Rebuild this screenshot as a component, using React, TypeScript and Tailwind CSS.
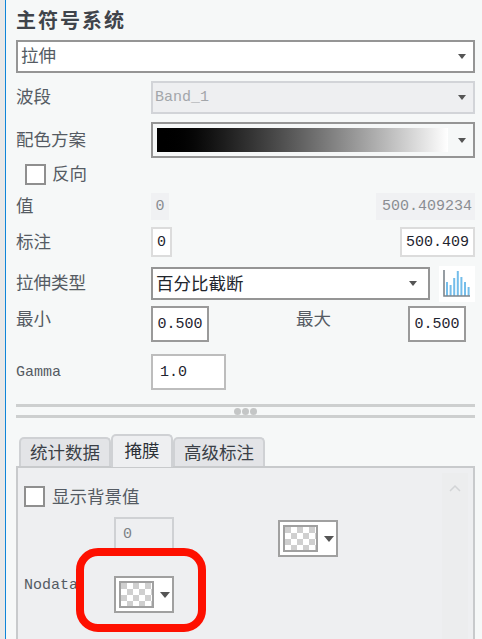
const cjk = "font-['Noto_Sans_CJK_SC',sans-serif]"
const mono = "font-['Liberation_Mono',monospace]"

function Caret({ className = 'border-t-[#555]' }: { className?: string }) {
  return <span className={`w-0 h-0 border-x-[4px] border-x-transparent border-t-[5px] ${className}`} />
}

function Label({ children, className = '' }: { children: React.ReactNode; className?: string }) {
  return <span className={`${cjk} block pb-[2px] text-[17.5px] leading-none text-[#555b63] ${className}`}>{children}</span>
}

function Row({ label, children, className = '', labelClass = '' }: { label: string; children: React.ReactNode; className?: string; labelClass?: string }) {
  return (
    <div className={`flex items-center ${className}`}>
      <div className="w-[135px] shrink-0">
        <Label className={labelClass}>{label}</Label>
      </div>
      {children}
    </div>
  )
}

function NumBox({ value, className = '', muted = false }: { value: string; className?: string; muted?: boolean }) {
  return (
    <div
      className={`${mono} text-[15px] pt-[2px] flex items-center border-2 bg-white text-[#1f2430] ${muted ? 'border-[#dcdcdc]' : 'border-[#9a9a9a]'} ${className}`}
    >
      {value}
    </div>
  )
}

function Checkbox() {
  return <span className="w-[21px] h-[21px] shrink-0 bg-white border-2 border-[#8f8f8f]" />
}

function Swatch() {
  return (
    <div className="w-[60px] h-[37px] flex items-center gap-[6px] pl-[3px] bg-white border-2 border-[#a0a0a0]">
      <div className="w-[35px] h-[27px] border-2 border-[#a0a0a0] bg-[repeating-conic-gradient(from_90deg,#cfcfcf_0_25%,#ffffff_0_50%)] bg-size-[12px_12px]" />
      <Caret className="border-t-[#555] border-x-[5px] border-t-[6px]" />
    </div>
  )
}

function Histogram() {
  // bar left edge and top, in icon coordinates
  const bars = [
    [7, 16],
    [10.6, 19],
    [14.2, 12],
    [17.8, 5],
    [21.4, 11],
    [25, 16],
    [28.6, 21],
  ]
  return (
    <div className="w-[36px] h-[36px] ml-[9px] mt-[1px] bg-white">
      <svg width="36" height="36" viewBox="0 0 36 36">
        {bars.map(([x, y]) => (
          <rect key={x} x={x} y={y} width="2" height={30 - y} fill="#74bdea" />
        ))}
        <path d="M5 4V30H31" fill="none" stroke="#7d858c" strokeWidth="1.6" />
      </svg>
    </div>
  )
}

function Tab({ label, active = false }: { label: string; active?: boolean }) {
  return (
    <div
      className={`${cjk} flex items-center justify-center border-2 border-b-0 rounded-t-[5px] text-[17.5px] leading-none ${
        active
          ? 'w-[62px] h-[33px] pb-[4px] bg-[#eeeff1] border-[#cfd1d4] text-[#2c3138] z-10'
          : 'w-[92px] h-[30px] pb-[2px] bg-[#e3e4e7] border-[#cfd1d4] text-[#3a3f46]'
      }`}
    >
      {label}
    </div>
  )
}

export default function App() {
  return (
    <div className="relative h-[639px] w-[482px] overflow-hidden flex bg-[#f6f8f8]">
      <div className="w-[6px] shrink-0 bg-[#e8e8e8] border-r border-r-[#0f85d8]" />
      <div className="flex-1 min-w-0 flex flex-col pl-[10px] pr-[7px]">
        <div className={`${cjk} h-[40px] pt-[7px] font-bold text-[20px] leading-[26px] tracking-[2px] text-[#3f444b]`}>
          主符号系统
        </div>

        <div className="h-[33px] flex items-center justify-between pl-[3px] pr-[7px] bg-white border-2 border-[#959595]">
          <Label className="text-[#2b3038] pb-[4px]">拉伸</Label>
          <Caret />
        </div>

        <Row label="波段" className="mt-[8px]" labelClass="pb-[4px]">
          <div className="flex-1 h-[33px] flex items-center justify-between pl-[2px] pr-[7px] bg-[#eeeff1] border-2 border-[#d2d4d8]">
            <span className={`${mono} text-[15px] pt-[2px] text-[#a3a6aa]`}>Band_1</span>
            <Caret />
          </div>
        </Row>

        <Row label="配色方案" className="mt-[8px]">
          <div className="flex-1 h-[36px] flex items-center justify-between pl-[4px] pr-[7px] border-2 border-[#959595]">
            <div className="w-[291px] h-[24px] bg-linear-to-r from-black to-white" />
            <Caret />
          </div>
        </Row>

        <div className="mt-[6px] ml-[9px] h-[21px] flex items-center gap-[6px]">
          <Checkbox />
          <Label className="pb-[4px]">反向</Label>
        </div>

        <Row label="值" className="mt-[8px] h-[27px]" labelClass="pb-[4px]">
          <div className={`${mono} w-[18px] h-[27px] pt-[2px] flex items-center justify-center text-[15px] bg-[#f0f1f3] text-[#8a8d92]`}>0</div>
          <div className={`${mono} w-[99px] h-[27px] ml-auto pr-[3px] pt-[2px] flex items-center justify-end text-[15px] bg-[#f0f1f3] text-[#8a8d92]`}>
            500.409234
          </div>
        </Row>

        <Row label="标注" className="mt-[7px] h-[30px]">
          <NumBox value="0" muted className="w-[21px] h-[30px] justify-center" />
          <NumBox value="500.409" muted className="w-[75px] h-[30px] justify-center ml-auto" />
        </Row>

        <Row label="拉伸类型" className="mt-[10px] h-[33px]" labelClass="pb-[3px]">
          <div className="w-[279px] h-[33px] flex items-center justify-between pl-[3px] pr-[11px] bg-white border-2 border-[#959595]">
            <Label className="text-[#22262d]">百分比截断</Label>
            <Caret />
          </div>
          <Histogram />
        </Row>

        <div className="mt-[6px] h-[36px] flex">
          <div className="w-[135px] shrink-0 pt-[3px]">
            <Label>最小</Label>
          </div>
          <NumBox value="0.500" className="w-[58px] h-[36px] justify-center" />
          <div className="ml-[87px] pt-[3px]">
            <Label>最大</Label>
          </div>
          <NumBox value="0.500" className="w-[58px] h-[36px] justify-center ml-[77px]" />
        </div>

        <div className="mt-[12px] h-[36px] flex items-center">
          <span className={`${mono} w-[135px] shrink-0 pt-[2px] text-[15px] text-[#555b63]`}>Gamma</span>
          <div className={`${mono} w-[75px] h-[36px] pl-[7px] pt-[2px] flex items-center text-[15px] bg-white text-[#1f2430] border-2 border-[#bdbdbd]`}>
            1.0
          </div>
        </div>

        <div className="mt-[14px] h-[14px] flex items-center justify-center gap-[1px] border-t-[3px] border-b-[3px] border-[#cdcfcf]">
          <span className="w-[7px] h-[7px] rounded-full bg-[#c4c6c6]" />
          <span className="w-[7px] h-[7px] rounded-full bg-[#c4c6c6]" />
          <span className="w-[7px] h-[7px] rounded-full bg-[#c4c6c6]" />
        </div>

        <div className="mt-[16px] h-[33px] ml-[3px] flex items-end">
          <Tab label="统计数据" />
          <Tab label="掩膜" active />
          <Tab label="高级标注" />
        </div>

        <div className="flex-1 -mt-[1px] flex bg-[#eeeff1] border-2 border-b-0 border-[#c8cacc]">
          <div className="flex-1 min-w-0 flex flex-col pl-[6px] pt-[18px]">
            <div className="flex items-center gap-[7px]">
              <Checkbox />
              <Label>显示背景值</Label>
            </div>
            <div className="mt-[10px] flex items-start">
              <div className={`${mono} ml-[90px] w-[60px] h-[36px] pl-[7px] flex items-center text-[15px] text-[#7d8186] border-2 border-[#cfd1d4]`}>0</div>
              <div className="ml-[104px] mt-[3px]">
                <Swatch />
              </div>
            </div>
            <div className="mt-[19px] flex items-start">
              <span className={`${mono} w-[90px] -mt-[1px] text-[15px] text-[#555b63]`}>Nodata</span>
              <Swatch />
            </div>
          </div>
          <div className="w-[26px] mr-[5px] mt-[5px] pt-[11px] flex justify-center bg-[#ecedee]">
            <svg width="12" height="8" viewBox="0 0 12 8">
              <path d="M1 7L6 2L11 7" fill="none" stroke="#d2d4d6" strokeWidth="1.5" />
            </svg>
          </div>
        </div>
      </div>

      <div className="absolute left-[76px] top-[548px] w-[130px] h-[84px] rounded-[22px] border-[8px] border-[#fe1000]" />
    </div>
  )
}
